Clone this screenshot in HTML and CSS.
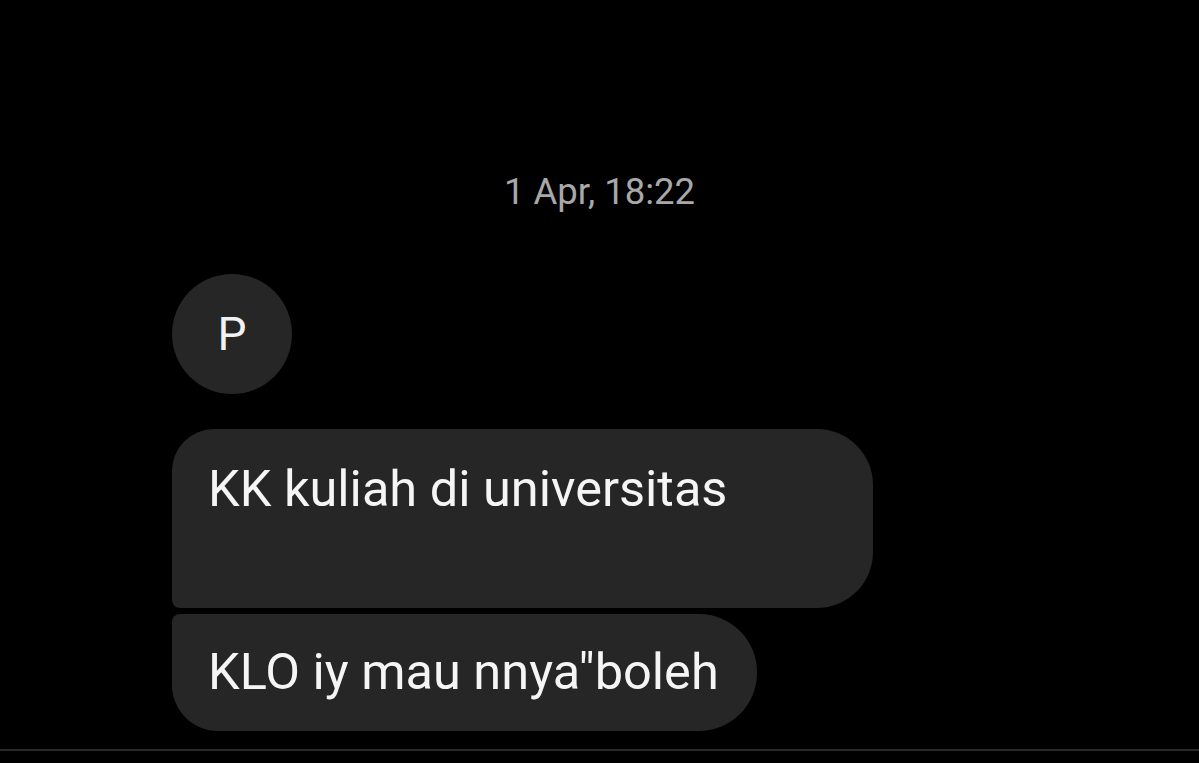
FILE: index.html
```html
<!DOCTYPE html>
<html lang="id">
<head>
<meta charset="utf-8">
<link rel="stylesheet" href="styles.css">
</head>
<body>
<main class="thread">
  <div class="stamp">1 Apr, 18:22</div>
  <div class="group">
    <div class="avatar">P</div>
    <div class="bubble bubble-first">KK kuliah di universitas</div>
    <div class="bubble bubble-last">KLO iy mau nnya"boleh</div>
  </div>
</main>
<div class="composer-line"></div>
</body>
</html>
```
FILE: styles.css
```css
html, body {
  margin: 0;
  padding: 0;
  background: #000;
  height: 100%;
  overflow: hidden;
}
body {
  font-family: Roboto, "Liberation Sans", sans-serif;
  color: #fff;
  display: flex;
  flex-direction: column;
}
.thread {
  flex: 0 0 749px;
  display: flex;
  flex-direction: column;
}
.stamp {
  margin-top: 170px;
  text-align: center;
  font-size: 36.5px;
  line-height: 44px;
  color: #a8a8a8;
}
.group {
  margin-top: 60px;
  padding-left: 172px;
  display: flex;
  flex-direction: column;
  align-items: flex-start;
}
.avatar {
  width: 120px;
  height: 120px;
  border-radius: 50%;
  background: #262626;
  display: flex;
  align-items: center;
  justify-content: center;
  font-size: 46px;
  font-weight: 400;
  color: #f2f2f2;
  margin-bottom: 35px;
}
.bubble {
  background: #262626;
  font-size: 50.5px;
  line-height: 60px;
  color: #f5f5f5;
  box-sizing: border-box;
}
.bubble-first {
  width: 701px;
  height: 179px;
  padding: 30px 40px 0 36px;
  border-radius: 42px 56px 56px 8px;
}
.bubble-last {
  margin-top: 6px;
  height: 117px;
  padding: 28px 38px 0 36px;
  border-radius: 8px 58px 58px 46px;
}
.composer-line {
  height: 2px;
  background: #2a2a2a;
}
```
